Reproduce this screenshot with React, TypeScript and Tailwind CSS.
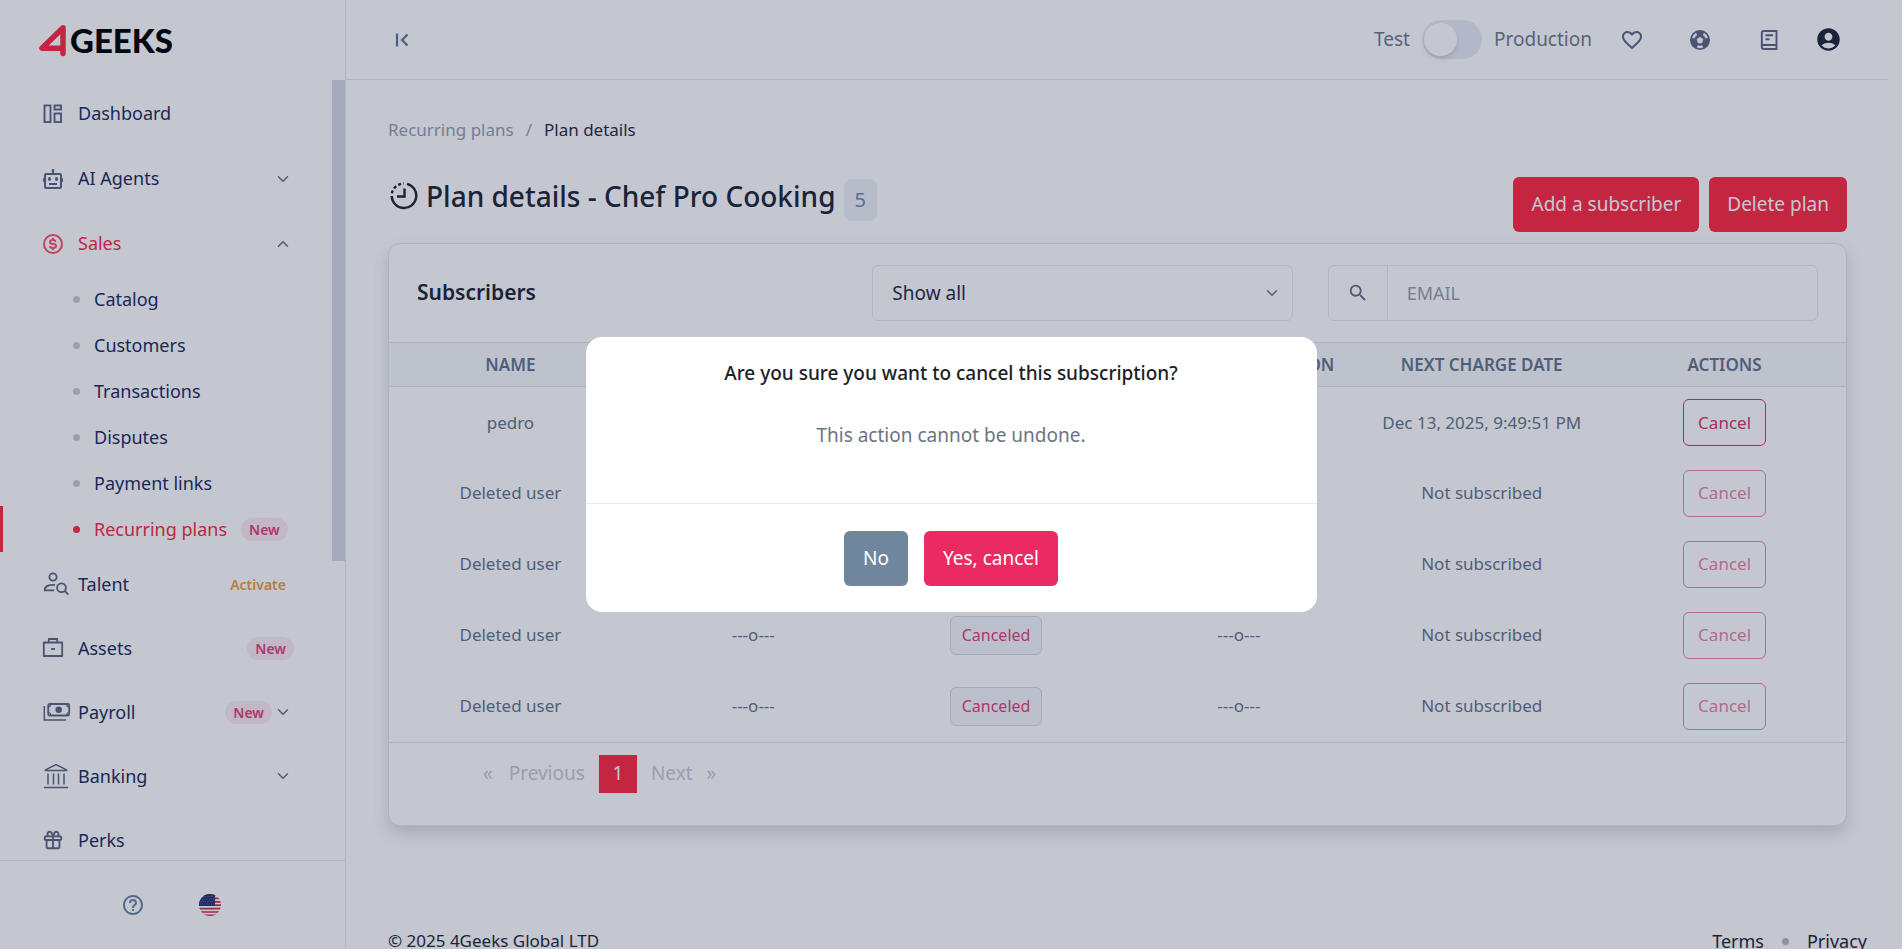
import { useState, type ReactNode } from "react";
import { BiBot, BiDollarCircle, BiGift, BiHelpCircle } from "react-icons/bi";
import { MdAccountCircle, MdFavoriteBorder, MdSearch } from "react-icons/md";
import { ChevronDown, ChevronUp } from "lucide-react";

/* ------------------------------- Icons ------------------------------- */

function DashboardIcon() {
  return (
    <svg width="20" height="20" viewBox="0 0 20 20" fill="none" stroke="currentColor" strokeWidth="1.900">
      <rect x="1.500" y="1.500" width="6" height="16.500" />
      <rect x="11.500" y="1.500" width="6.500" height="4" />
      <rect x="11.500" y="9.500" width="6.500" height="8.500" />
    </svg>
  );
}

function TalentIcon() {
  return (
    <svg width="29" height="26" viewBox="-3 0 29 26" fill="none" stroke="currentColor" strokeWidth="1.800">
      <circle cx="10" cy="6" r="3.600" />
      <path d="M12 14.200C7.500 13.300 2 15 1.800 18v1.400h9.400" />
      <circle cx="18.500" cy="16.700" r="4.400" />
      <path d="M21.700 20l3.600 3.600" />
    </svg>
  );
}

function AssetsIcon() {
  return (
    <svg width="22" height="22" viewBox="0 0 22 22" fill="none" stroke="currentColor" strokeWidth="1.800" strokeLinejoin="round">
      <path d="M1.800 5.500h18.400v13.500H1.800z" />
      <path d="M6.800 5.500v-3.500h8.400v3.500" />
      <path d="M9 12h4" />
    </svg>
  );
}

function PayrollIcon() {
  return (
    <svg width="31" height="20" viewBox="-3 0 31 20" fill="none" stroke="currentColor" strokeWidth="1.800">
      <rect x="5.200" y="2" width="21" height="11.500" rx="1.500" />
      <circle cx="15.700" cy="7.700" r="3.300" fill="currentColor" stroke="none" />
      <path d="M5.200 5q2.500 0 2.500-3M26.200 5q-2.500 0-2.500-3M5.200 10.500q2.500 0 2.500 3M26.200 10.500q-2.500 0-2.500 3" strokeWidth="1.200" />
      <path d="M1.300 4v14H23" strokeWidth="1.500" />
    </svg>
  );
}

function BankIcon() {
  return (
    <svg width="29" height="26" viewBox="-3 0 29 26" fill="none" stroke="currentColor" strokeWidth="1.500">
      <path d="M1 24.500h24M1.500 7.500h23M2.500 6.800L13 1.500l10.500 5.300" />
      <path d="M5 10.500v11M10.500 10.500v11M15.500 10.500v11M21 10.500v11" />
    </svg>
  );
}

function CollapseIcon() {
  return (
    <svg width="14" height="16" viewBox="0 0 14 16" fill="none" stroke="currentColor" strokeWidth="2.200">
      <path d="M2 1.500v13M12.500 2.500L7 8l5.500 5.500" />
    </svg>
  );
}

function BallIcon() {
  return (
    <svg width="22" height="22" viewBox="0 0 22 22" fill="none">
      <circle cx="11" cy="11" r="10" fill="currentColor" />
      <path d="M4.300 9.300A7 7 0 0 1 7.600 4.900M17.700 9.300A7 7 0 0 0 14.400 4.900M8.300 17.400A7 7 0 0 0 13.700 17.400" stroke="#fff" strokeWidth="2.400" />
      <path d="M11 7.700l3.300 2.500-1.200 4H8.900l-1.200-4z" fill="#fff" />
    </svg>
  );
}

function BookIcon() {
  return (
    <svg width="18" height="22" viewBox="0 0 18 22" fill="none" stroke="currentColor" strokeWidth="1.900">
      <path d="M16.500 2H3.800Q1.800 2 1.800 4v14q0 2 2 2h12.700z" />
      <path d="M2 16h14.500M5.500 6.200h7.500M5.500 10.200h4" />
    </svg>
  );
}

function PlanIcon() {
  return (
    <svg width="28" height="28" viewBox="0 0 28 28" fill="none" stroke="currentColor" strokeWidth="2.400">
      <path d="M17 1.800A12.300 12.300 0 1 1 1.700 14" />
      <path d="M1.900 11.300A12.300 12.300 0 0 1 14 1.500" strokeDasharray="3 2.400" />
      <path d="M14.500 6.500v8H7" />
    </svg>
  );
}

function FlagIcon() {
  return (
    <svg width="22" height="22" viewBox="0 0 22 22">
      <clipPath id="flag-round"><circle cx="11" cy="11" r="11" /></clipPath>
      <g clipPath="url(#flag-round)">
        <rect width="22" height="22" fill="#fff" />
        <path d="M0 1h22M0 4.400h22M0 7.800h22M0 11.200h22M0 14.600h22M0 18h22M0 21.400h22" stroke="#d22f44" strokeWidth="1.700" />
        <rect width="16" height="12" fill="#25306e" />
        <path d="M2 2.500h13M1 5h14M2 7.500h13M1 10h14" stroke="#8a91bd" strokeWidth="0.800" strokeDasharray="0.800 1.400" />
      </g>
    </svg>
  );
}

function Logo() {
  return (
    <a href="#" aria-label="4Geeks" className="flex items-center gap-0.5">
      <svg width="30" height="34" viewBox="0 0 30 34" fill="none" stroke="#ff273f" strokeLinejoin="round" strokeLinecap="round">
        <path d="M25 30.500V4.800L4 25.200h21" strokeWidth="5.500" />
      </svg>
      <span className="font-['Lato'] text-[33px] leading-10 font-black text-black">GEEKS</span>
    </a>
  );
}

/* ------------------------------ Sidebar ------------------------------ */

type NavItem = {
  label: string;
  icon: ReactNode;
  badge?: "New" | "Activate";
  chevron?: "up" | "down";
  active?: boolean;
};

const MAIN_NAV: NavItem[] = [
  { label: "Dashboard", icon: <DashboardIcon /> },
  { label: "AI Agents", icon: <BiBot size={24} />, chevron: "down" },
  { label: "Sales", icon: <BiDollarCircle size={24} />, chevron: "up", active: true },
];

const SALES_NAV = ["Catalog", "Customers", "Transactions", "Disputes", "Payment links", "Recurring plans"];

const MORE_NAV: NavItem[] = [
  { label: "Talent", icon: <TalentIcon />, badge: "Activate" },
  { label: "Assets", icon: <AssetsIcon />, badge: "New" },
  { label: "Payroll", icon: <PayrollIcon />, badge: "New", chevron: "down" },
  { label: "Banking", icon: <BankIcon />, chevron: "down" },
  { label: "Perks", icon: <BiGift size={22} /> },
];

function Badge({ kind }: { kind: "New" | "Activate" }) {
  return (
    <span
      className={`rounded-full px-2 text-sm leading-[23px] font-semibold ${
        kind === "New" ? "bg-[#fdeaf1] text-[#e0407a]" : "text-[#f09d38]"
      }`}
    >
      {kind}
    </span>
  );
}

function NavRow({ item, className }: { item: NavItem; className: string }) {
  return (
    <a href="#" className={`flex items-center pr-[38px] pl-10 ${className} ${item.active ? "text-[#ff273f]" : "text-[#1b2b5e]"}`}>
      <span className={`flex w-[38px] items-center ${item.active ? "text-[#ff4d6a]" : "text-[#5d6580]"}`}>
        <span className="flex min-w-[25px] justify-center">{item.icon}</span>
      </span>
      <span className="flex-1">{item.label}</span>
      {item.badge && <Badge kind={item.badge} />}
      {item.chevron && (
        <span className="px-0.5 text-[#66708c]">
          {item.chevron === "up" ? <ChevronUp size={18} /> : <ChevronDown size={18} />}
        </span>
      )}
    </a>
  );
}

function Sidebar() {
  return (
    <aside className="flex w-[346px] shrink-0 flex-col border-r border-[#e3e6ee] text-[18px]">
      <div className="flex h-20 shrink-0 items-center pl-[38px]">
        <Logo />
      </div>

      <div className="flex min-h-0 flex-1">
        <nav className="min-w-0 flex-1 overflow-hidden pt-px">
          {MAIN_NAV.map((item) => <NavRow key={item.label} item={item} className="h-[65px]" />)}
          <ul>
            {SALES_NAV.map((label) => {
              const active = label === "Recurring plans";
              return (
                <li key={label}>
                  <a
                    href="#"
                    className={`flex h-[46px] items-center border-l-3 pl-[70px] ${
                      active ? "border-[#ff273f] text-[#ff273f]" : "border-transparent text-[#1b2b5e]"
                    }`}
                  >
                    <span className={`mr-3.5 size-[7px] rounded-full ${active ? "bg-[#ff273f]" : "bg-[#c5cad6]"}`} />
                    <span className="mr-3.5">{label}</span>
                    {active && <Badge kind="New" />}
                  </a>
                </li>
              );
            })}
          </ul>
          {MORE_NAV.map((item) => <NavRow key={item.label} item={item} className="h-16" />)}
        </nav>
        {/* Scroll thumb */}
        <div className="h-[481px] w-[13px] bg-[#d6dae4]" />
      </div>

      <div className="flex h-[89px] shrink-0 items-center gap-[54px] border-t border-[#e3e6ee] pl-[121px]">
        <button aria-label="Help" className="text-[#6c80a0]"><BiHelpCircle size={24} /></button>
        <button aria-label="Language"><FlagIcon /></button>
      </div>
    </aside>
  );
}

/* ------------------------------- Header ------------------------------ */

function Header() {
  return (
    <header className="flex h-20 shrink-0 items-center justify-between border-b border-[#e3e6ee] pr-[46px] pl-[49px] text-[#6c7a91]">
      <button aria-label="Collapse menu" className="text-[#5f7396]"><CollapseIcon /></button>
      <div className="flex items-center">
        <label className="flex items-center gap-3 text-[19px]">
          Test
          <input type="checkbox" className="peer sr-only" />
          <span className="flex h-[39px] w-[60px] items-center rounded-full bg-[#e9ebf5] px-0.5">
            <span className="size-[33px] rounded-full bg-white shadow-md" />
          </span>
          Production
        </label>
        <div className="ml-7 flex items-center text-[#5d6584]">
          <button aria-label="Favorites" className="w-[69px]"><MdFavoriteBorder size={24} /></button>
          <button aria-label="Community" className="w-[71px]"><BallIcon /></button>
          <button aria-label="Docs" className="w-[55px]"><BookIcon /></button>
          <button aria-label="Account" className="text-[#1d2433]"><MdAccountCircle size={27} /></button>
        </div>
      </div>
    </header>
  );
}

/* ----------------------------- Subscribers --------------------------- */

const COLUMNS = ["NAME", "EMAIL", "STATUS", "END OF SUBSCRIPTION", "NEXT CHARGE DATE", "ACTIONS"];

const ROWS = [
  { id: 1, name: "pedro", email: "---o---", status: "Active", end: "---o---", next: "Dec 13, 2025, 9:49:51 PM", disabled: false },
  { id: 2, name: "Deleted user", email: "---o---", status: "Canceled", end: "---o---", next: "Not subscribed", disabled: true },
  { id: 3, name: "Deleted user", email: "---o---", status: "Canceled", end: "---o---", next: "Not subscribed", disabled: true },
  { id: 4, name: "Deleted user", email: "---o---", status: "Canceled", end: "---o---", next: "Not subscribed", disabled: true },
  { id: 5, name: "Deleted user", email: "---o---", status: "Canceled", end: "---o---", next: "Not subscribed", disabled: true },
];

function SubscribersCard({ onCancel }: { onCancel: () => void }) {
  return (
    <section className="rounded-xl border border-[#dfe3ec] bg-white shadow-[0_8px_16px_rgba(60,75,110,0.2)]">
      <div className="flex h-[98px] items-center px-7">
        <h2 className="flex-1 text-[21px] font-semibold text-[#1d2433]">Subscribers</h2>
        <div className="relative w-[30%]">
          <select aria-label="Status filter" className="h-14 w-full appearance-none rounded-md border border-[#e6e9ef] px-[19px] text-[19px] text-[#252b3b]">
            <option>Show all</option>
          </select>
          <ChevronDown size={18} className="pointer-events-none absolute top-[19px] right-3 text-[#66708c]" />
        </div>
        <div className="ml-[35px] flex h-14 w-[35%] items-center rounded-md border border-[#e6e9ef]">
          <span className="flex h-full w-[59px] items-center justify-center border-r border-[#e6e9ef] text-[#626b80]">
            <MdSearch size={22} />
          </span>
          <input aria-label="Email" placeholder="EMAIL" className="h-full min-w-0 flex-1 px-[19px] text-[18px] outline-none placeholder:text-[#969eae]" />
        </div>
      </div>

      <table className="w-full table-fixed text-center text-[17px] text-[#64748b]">
        <thead>
          <tr className="h-11 border-y border-[#dfe3ec] bg-[#f6f8fb]">
            {COLUMNS.map((c) => <th key={c} className="font-semibold">{c}</th>)}
          </tr>
        </thead>
        <tbody>
          {ROWS.map((r) => (
            <tr key={r.id} className="h-[71px]">
              <td>{r.name}</td>
              <td>{r.email}</td>
              <td>
                <span className="inline-block rounded-md border border-[#d5dae5] bg-[#f4f6fa] px-[11px] text-base leading-[37px] text-[#e0407a]">
                  {r.status}
                </span>
              </td>
              <td>{r.end}</td>
              <td>{r.next}</td>
              <td>
                <button
                  onClick={onCancel}
                  disabled={r.disabled}
                  className="h-[47px] rounded-md border border-[#e0306c] px-3.5 text-[#e0306c] disabled:opacity-60"
                >
                  Cancel
                </button>
              </td>
            </tr>
          ))}
        </tbody>
      </table>

      <div className="flex h-[83px] items-start border-t border-[#dfe3ec] pt-3 pl-[94px] text-[19px] text-[#c6cad2]">
        <button disabled className="h-[38px] pr-4">«</button>
        <button disabled className="h-[38px] pr-3.5">Previous</button>
        <button className="h-[38px] w-[38px] bg-[#ff273f] text-white">1</button>
        <button disabled className="h-[38px] px-3.5">Next</button>
        <button disabled className="h-[38px]">»</button>
      </div>
    </section>
  );
}

/* ------------------------------- Dialog ------------------------------ */

function CancelDialog({ onClose }: { onClose: () => void }) {
  return (
    <div className="fixed inset-0 flex items-center justify-center bg-[#131f43]/25">
      <div role="dialog" aria-modal="true" aria-labelledby="cancel-title" className="w-full max-w-[731px] rounded-2xl bg-white text-center text-[19px]">
        <div className="h-[166px] pt-[22px]">
          <h2 id="cancel-title" className="leading-7 font-medium text-[#1d2127]">
            Are you sure you want to cancel this subscription?
          </h2>
          <p className="mt-[34px] leading-7 text-[#6c7480]">This action cannot be undone.</p>
        </div>
        <div className="flex justify-center gap-4 border-t border-[#e6e8ec] pt-[27px] pb-[26px] text-white">
          <button onClick={onClose} className="h-[55px] rounded-md bg-[#70869d] px-[19px]">No</button>
          <button onClick={onClose} className="h-[55px] rounded-md bg-[#ea2a60] px-[19px]">Yes, cancel</button>
        </div>
      </div>
    </div>
  );
}

export default function App() {
  const [confirming, setConfirming] = useState(true);

  return (
    <div className="flex h-screen overflow-hidden bg-white font-['Noto_Sans',sans-serif]">
      <Sidebar />
      <div className="mr-3.5 flex min-w-0 flex-1 flex-col">
        <Header />
        <main className="shrink-0 pt-9 pr-[41px] pl-[42px]">
          <nav className="flex h-7 items-center gap-3 text-[17px] text-[#969eae]">
            <a href="#">Recurring plans</a>
            <span>/</span>
            <span className="text-[#252b3b]">Plan details</span>
          </nav>

          <div className="mt-[33px] flex items-start justify-between">
            <div className="flex items-start gap-2 pl-0.5 text-[#1d2433]">
              <h1 className="flex items-center gap-2 text-[28px] leading-[38px] font-medium">
                <PlanIcon />
                Plan details - Chef Pro Cooking
              </h1>
              <span className="mt-0.5 rounded-lg bg-[#eef1f8] px-[11px] text-xl leading-[42px] text-[#7488a8]">5</span>
            </div>
            <div className="flex gap-2.5 text-[19px] text-white">
              <button className="h-[55px] rounded-md bg-[#ff273f] px-[18px]">Add a subscriber</button>
              <button className="h-[55px] rounded-md bg-[#ff273f] px-[18px]">Delete plan</button>
            </div>
          </div>

          <div className="mt-[11px]">
            <SubscribersCard onCancel={() => setConfirming(true)} />
          </div>
        </main>

        <footer className="mt-[102px] flex shrink-0 items-center justify-between pr-[21px] pl-[42px] text-[17px] text-[#1d2433]">
          <span>© 2025 4Geeks Global LTD</span>
          <div className="flex items-center gap-[18px] text-[18px]">
            <a href="#">Terms</a>
            <span className="size-[7px] rounded-full bg-[#b4bac8]" />
            <a href="#">Privacy</a>
          </div>
        </footer>
      </div>
      {confirming && <CancelDialog onClose={() => setConfirming(false)} />}
    </div>
  );
}
